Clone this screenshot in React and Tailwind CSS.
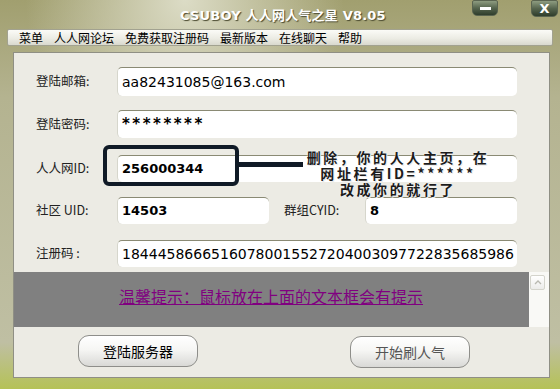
import React from 'react'

const cjk = { fontFamily: '"Noto Sans CJK SC", "DejaVu Sans", sans-serif' }
const latin = { fontFamily: '"DejaVu Sans", "Noto Sans CJK SC", sans-serif' }

function Field({ className = '', children, bold }) {
  return (
    <div
      className={`h-full flex items-center bg-white rounded-[5px] border-t border-[#8a8a74] border-l border-l-[#d6d6cc] pl-[4px] text-black ${bold ? 'font-bold text-[13px]' : 'text-[14px]'} ${className}`}
      style={latin}
    >
      {children}
    </div>
  )
}

function Label({ children, className = '' }) {
  return (
    <div className={`w-[103px] pl-[22px] shrink-0 text-[12.5px] text-[#222] ${className}`} style={cjk}>
      {children}
    </div>
  )
}

function SkinButton({ children, dim }) {
  return (
    <div
      className={`w-[120px] h-[32px] flex items-center justify-center rounded-[11px] border border-[#8e8e8a] bg-[linear-gradient(180deg,#ffffff_0%,#f6f6f4_45%,#d9d9d6_100%)] text-[14px] ${dim ? 'text-[#555]' : 'text-black'}`}
      style={cjk}
    >
      {children}
    </div>
  )
}

export default function App() {
  const menus = ['菜单', '人人网论坛', '免费获取注册码', '最新版本', '在线聊天', '帮助']
  return (
    <div className="w-[560px] h-[389px] overflow-hidden flex flex-col bg-[radial-gradient(ellipse_at_33%_0%,#dcdcc6_0%,transparent_30%),linear-gradient(180deg,#a19f6f_0%,#b4b390_25%,#bfbfa3_88%,#b5c256_100%)]">
      {/* title bar */}
      <div className="h-[29px] flex items-start shrink-0">
        <div
          className="pl-[180px] pt-[6px] text-[13px] font-bold text-white [text-shadow:1px_1px_1px_#4a4a30] tracking-[0.2px]"
          style={latin}
        >
          CSUBOY 人人网人气之星 V8.05
        </div>
        <div className="ml-auto w-[26px] h-[16px] rounded-b-[5px] rounded-t-[2px] bg-[linear-gradient(180deg,#8e9c80_0%,#56654e_50%,#2f3d2c_100%)] border border-[#5a6450] flex items-center justify-center">
          <div className="w-[11px] h-[3px] bg-white" />
        </div>
        <div className="ml-[33px] mr-[2px] w-[27px] h-[17px] rounded-b-[5px] rounded-t-[2px] bg-[linear-gradient(180deg,#8e9c80_0%,#56654e_50%,#2f3d2c_100%)] border border-[#5a6450] flex items-center justify-center text-white font-bold text-[13px] leading-none" style={latin}>
          X
        </div>
      </div>

      {/* menu bar */}
      <div className="ml-[7px] w-[546px] h-[17px] shrink-0 flex items-center gap-[11px] pl-[11px] border border-[#a2a290] rounded-[2px] bg-[linear-gradient(180deg,#fbfbf7_0%,#ecece4_55%,#d9d9ce_100%)] text-[12px] text-black" style={cjk}>
        {menus.map(m => (
          <span key={m}>{m}</span>
        ))}
      </div>

      {/* main panel */}
      <div className="relative ml-[13px] mt-[6px] w-[537px] h-[326px] shrink-0 flex flex-col bg-[#ecebe4] border border-[#8f8f84]">
        <div className="mt-[14px] h-[29px] flex items-center">
          <Label>登陆邮箱:</Label>
          <Field className="w-[400px]">aa82431085@163.com</Field>
        </div>
        <div className="mt-[14px] h-[28px] flex items-center">
          <Label>登陆密码:</Label>
          <Field className="w-[400px] font-bold text-[15px] tracking-[2.5px]">********</Field>
        </div>
        <div className="mt-[17px] h-[27px] flex items-center">
          <Label>人人网ID:</Label>
          <Field bold className="w-[400px]">256000344</Field>
        </div>
        <div className="mt-[15px] h-[27px] flex items-center">
          <Label>社区 UID:</Label>
          <Field bold className="w-[152px]">14503</Field>
          <div className="w-[96px] pl-[15px] shrink-0 text-[12.5px] text-[#222]" style={cjk}>群组CYID:</div>
          <Field bold className="w-[152px]">8</Field>
        </div>
        <div className="mt-[16px] h-[27px] flex items-center">
          <Label>注册码 :</Label>
          <Field className="w-[400px] pl-[3px]">18444586665160780015527204003097722835685986</Field>
        </div>

        {/* tip area */}
        <div className="mt-[5px] h-[55px] flex">
          <div className="flex-1 bg-[#808080] flex items-start pt-[15px] pl-[105px]">
            <span className="text-[16px] text-[#800080] underline leading-[18px]" style={cjk}>
              温馨提示：鼠标放在上面的文本框会有提示
            </span>
          </div>
          <div className="w-[20px] bg-[#f9f9f6] flex flex-col items-start pt-[3px] pl-[1px]">
            <div className="w-[15px] h-[15px] rounded-[2px] border border-[#d4d4cc] bg-[linear-gradient(180deg,#ffffff,#ececea)] flex items-center justify-center">
              <svg width="8" height="5" viewBox="0 0 8 5">
                <path d="M1 4 L4 1 L7 4" fill="none" stroke="#b8b8b0" strokeWidth="1.3" />
              </svg>
            </div>
          </div>
        </div>

        {/* buttons */}
        <div className="mt-[8px] flex">
          <div className="ml-[64px]">
            <SkinButton>登陆服务器</SkinButton>
          </div>
          <div className="ml-[152px] mt-[1px]">
            <SkinButton dim>开始刷人气</SkinButton>
          </div>
        </div>

        {/* annotation drawn over the ID field */}
        <div className="absolute left-[89px] top-[92px] w-[136px] h-[41px] border-[4px] border-[#101a26] rounded-[6px]" />
        <div className="absolute left-[223px] top-[109px] w-[66px] h-[5px] bg-[#101a26]" />
        <div
          className="absolute left-[283px] top-[96px] w-[202px] text-center font-bold text-[14px] tracking-[2.6px] leading-[16px] text-[#1c1c1c] [text-shadow:0_0_2px_#ffffff,1px_1px_0_#e8e8e8]"
          style={cjk}
        >
          <div>删除，你的人人主页，在</div>
          <div>网址栏有ID=******</div>
          <div>改成你的就行了</div>
        </div>
      </div>
    </div>
  )
}
